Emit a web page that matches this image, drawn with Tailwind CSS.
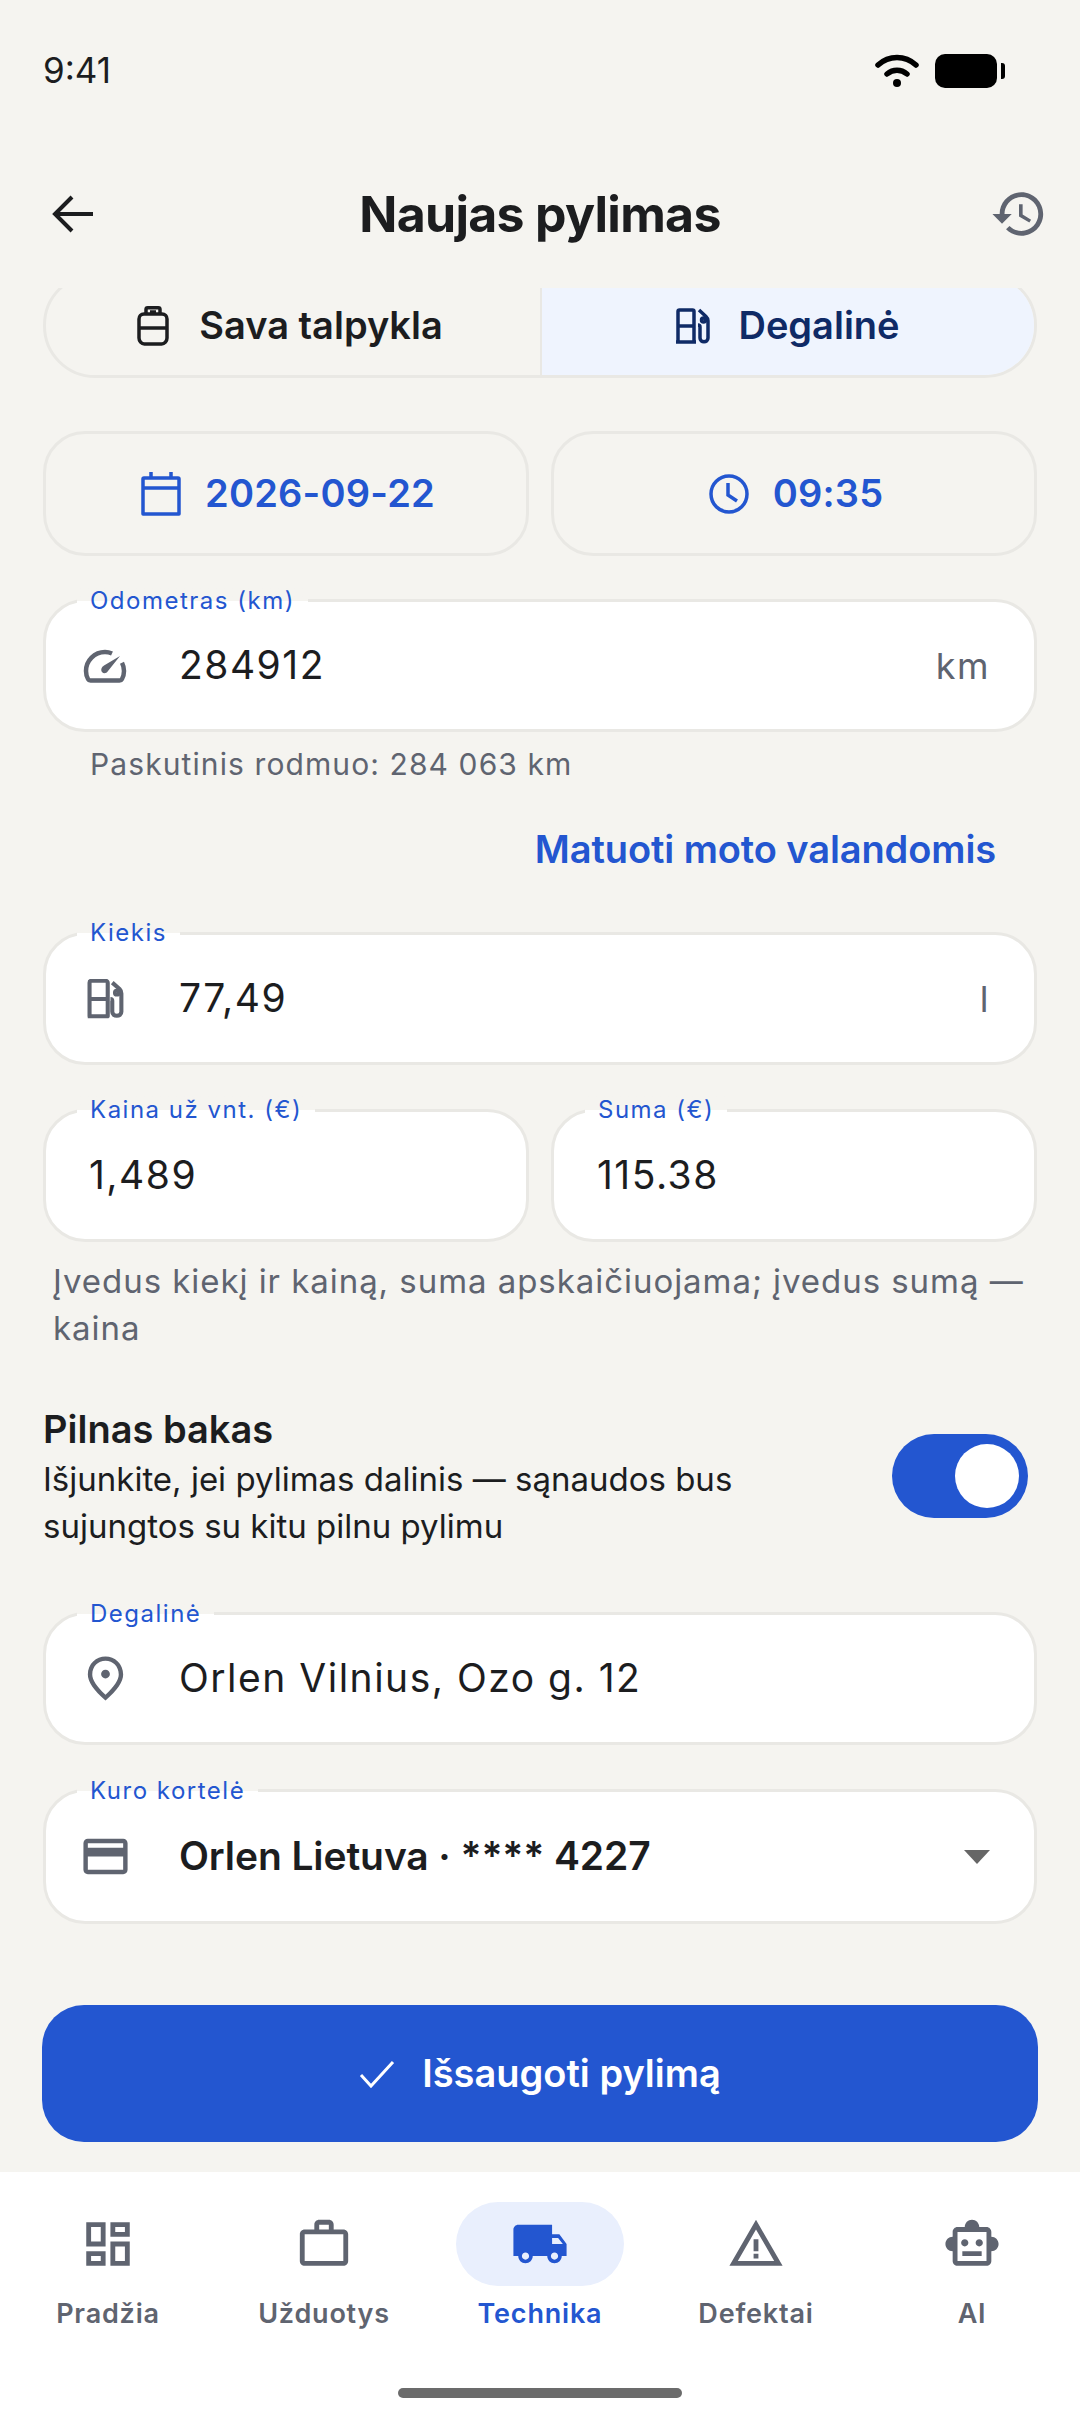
<!DOCTYPE html>
<html lang="lt">
  <head>
    <meta charset="UTF-8" />
    <meta name="viewport" content="width=device-width, initial-scale=1.0" />
    <title>Naujas pylimas</title>
    <script src="https://cdn.jsdelivr.net/npm/@tailwindcss/browser@4"></script>
  </head>
  <body class="bg-[#f5f4f0]">
    <div class="w-[1080px] h-[2424px] flex flex-col font-['Inter',sans-serif] text-[#1c1d1f] overflow-hidden">
      <!-- status bar -->
      <div class="h-[140px] shrink-0 flex justify-between items-start pl-[43px] pr-[44px] pt-[50px]">
        <span class="text-[35px] leading-[40px]">9:41</span>
        <div class="flex items-center gap-[16px] mt-[4px] mr-[31px]">
          <svg class="w-[44px] h-[34px]" viewBox="0 0 44 34" fill="none" stroke="#000" stroke-width="5.5" stroke-linecap="round">
            <path d="M3 11C14 1 30 1 41 11" />
            <path d="M12 20c6-5 14-5 20 0" />
            <circle cx="22" cy="29" r="4" fill="#000" stroke="none" />
          </svg>
          <div class="flex items-center gap-[4px]">
            <div class="w-[62px] h-[34px] rounded-[10px] bg-black"></div>
            <div class="w-[4px] h-[16px] rounded-r-[3px] bg-black"></div>
          </div>
        </div>
      </div>

      <!-- header -->
      <div class="h-[148px] shrink-0 grid grid-cols-[1fr_auto_1fr] items-center px-[32px]">
        <svg class="ml-[20px] w-[42px] h-[38px]" viewBox="0 0 42 38" fill="none" stroke="#1c1d1f" stroke-width="4"><path d="M41 19H4M20 2L3 19l17 17" /></svg>
        <h1 class="text-[50px] leading-[60px] font-bold tracking-[-0.7px]">Naujas pylimas</h1>
        <svg class="w-[58px] h-[58px] justify-self-end" viewBox="0 0 24 24" fill="#5f6470"><path d="M13 3c-4.97 0-9 4.03-9 9H1l3.89 3.89.07.14L9 12H6c0-3.87 3.13-7 7-7s7 3.13 7 7-3.13 7-7 7c-1.93 0-3.68-.79-4.94-2.06l-1.42 1.42C8.27 19.99 10.51 21 13 21c4.97 0 9-4.03 9-9s-4.03-9-9-9zm-1 5v5l4.28 2.54.72-1.21-3.5-2.08V8H12z" /></svg>
      </div>

      <!-- form, scrolled slightly under the header -->
      <main class="flex-1 min-h-0 overflow-hidden px-[43px]">
        <!-- source switch -->
        <div class="h-[105px] -mt-[15px] flex rounded-[52px] border-[3px] border-[#e9e8e4] overflow-hidden text-[38px] font-semibold">
          <div class="w-1/2 flex items-center justify-center gap-[30px] pr-[6px]">
            <svg class="w-[32px] h-[40px]" viewBox="0 0 32 40" fill="none" stroke="#1c1d1f" stroke-width="3.5" stroke-linejoin="round">
              <path d="M9 8V3.5c0-1 .8-1.7 1.7-1.7h10.6c1 0 1.7.8 1.7 1.7V8" />
              <path d="M7 8h18c3 0 5 2.4 5 5v19c0 3-2.4 6-5.400 6H7.400C4.400 38 2 35 2 32V13c0-2.600 2-5 5-5z" />
              <path d="M2 22h28M13 6h6" />
            </svg>
            <span>Sava talpykla</span>
          </div>
          <div class="w-1/2 flex items-center justify-center gap-[28px] bg-[#eff4fe] border-l-[2px] border-[#e9e8e4] text-[#0f2a66]">
            <svg class="w-[34px] h-[36px]" viewBox="0 0 34 36" fill="none" stroke="#0f2a66" stroke-width="3.5" stroke-linejoin="round">
              <path d="M2 34V3.500C2 2.600 2.600 2 3.500 2h13c.9 0 1.500.6 1.500 1.500V34zM2 18h16M0 34h20" />
              <path d="M23 2l7 6.500c1.300 1.200 2 2.500 2 4.300V30c0 5-8 5-8 0V19c0-1-.6-2-2-2" />
              <circle cx="27.500" cy="12" r="2" />
            </svg>
            <span>Degalinė</span>
          </div>
        </div>

        <!-- date and time -->
        <div class="flex gap-[22px] mt-[53px] text-[38px] font-semibold tracking-[0.2px] text-[#2356d0]">
          <div class="flex-1 h-[125px] rounded-[42px] border-[3px] border-[#e9e8e4] flex items-center justify-center gap-[24px] pl-[4px]">
            <svg class="w-[40px] h-[44px]" viewBox="0 0 40 44" fill="none" stroke="#2356d0" stroke-width="3.500" stroke-linejoin="round">
              <path d="M3 6h34c.6 0 1 .4 1 1v35H2V7c0-.6.4-1 1-1zM2 16h36" />
              <path d="M10 0v6M30 0v6" />
            </svg>
            <span>2026-09-22</span>
          </div>
          <div class="flex-1 h-[125px] rounded-[42px] border-[3px] border-[#e9e8e4] flex items-center justify-center gap-[24px] pl-[4px]">
            <svg class="w-[40px] h-[40px]" viewBox="0 0 40 40" fill="none" stroke="#2356d0" stroke-width="3.500">
              <circle cx="20" cy="20" r="18" />
              <path d="M19 9v12l9 6" />
            </svg>
            <span>09:35</span>
          </div>
        </div>

        <!-- odometer -->
        <div class="relative mt-[43px] h-[133px] rounded-[42px] border-[3px] border-[#e9e8e4] bg-white flex items-center pr-[44px] text-[39px] tracking-[1.5px]">
          <span class="absolute -top-[16px] left-[31px] px-[13px] bg-linear-to-b from-[#f5f4f0] from-50% to-white to-50% text-[24px] leading-[30px] tracking-[1.5px] text-[#2356d0]">Odometras (km)</span>
          <div class="ml-[32px] w-[54px] mr-[47px] flex justify-center">
            <svg class="w-[44px] h-[34px]" viewBox="0 0 44 34" fill="none" stroke="#5f6470" stroke-width="4.500" stroke-linejoin="round">
              <path d="M29 4.500C26.800 3.500 24.500 3 22 3 11.500 3 3 11.500 3 22c0 3 .6 5.500 2 8 .5 1 1.300 1.500 2.500 1.500h29c1.200 0 2-.5 2.500-1.500 1.400-2.500 2-5 2-8 0-3-.7-5.800-2-8.300" />
              <path d="M37 7L21 16.500c-2.500 1.500-3.500 4.500-2 6.500 1.500 2 4.500 1.500 6-1z" fill="#5f6470" stroke="none" />
            </svg>
          </div>
          <span class="flex-1">284912</span>
          <span class="text-[#5f6470] text-[36px]">km</span>
        </div>
        <p class="mt-[16px] ml-[47px] text-[30px] leading-[32px] tracking-[1.1px] text-[#5f6470]">Paskutinis rodmuo: 284 063 km</p>
        <p class="mt-[47px] text-right pr-[41px] text-[38px] leading-[44px] font-semibold tracking-[-0.1px] text-[#2356d0]">Matuoti moto valandomis</p>

        <!-- quantity -->
        <div class="relative mt-[61px] h-[133px] rounded-[42px] border-[3px] border-[#e9e8e4] bg-white flex items-center pr-[44px] text-[39px] tracking-[1.5px]">
          <span class="absolute -top-[17px] left-[31px] px-[13px] bg-linear-to-b from-[#f5f4f0] from-50% to-white to-50% text-[24px] leading-[30px] tracking-[1.5px] text-[#2356d0]">Kiekis</span>
          <div class="ml-[32px] w-[54px] mr-[47px] flex justify-center">
            <svg class="w-[38px] h-[40px]" viewBox="0 0 40 44" fill="none" stroke="#5f6470" stroke-width="4.500" stroke-linejoin="round">
              <path d="M3 41V4c0-1 .8-2 2-2h16c1 0 2 1 2 2v37zM3 22h20M1 41h23" />
              <path d="M28 4l8 7c1.500 1.500 2 3 2 5v20c0 6-10 6-10 0V24c0-1-.6-2-2-2" />
              <circle cx="33" cy="15" r="2" />
            </svg>
          </div>
          <span class="flex-1">77,49</span>
          <span class="text-[#5f6470] text-[36px]">l</span>
        </div>

        <!-- price and total -->
        <div class="flex gap-[22px] mt-[44px] text-[39px] tracking-[1.5px]">
          <div class="relative flex-1 h-[133px] rounded-[42px] border-[3px] border-[#e9e8e4] bg-white flex items-center pl-[43px]">
            <span class="absolute -top-[17px] left-[31px] px-[13px] bg-linear-to-b from-[#f5f4f0] from-50% to-white to-50% text-[24px] leading-[30px] tracking-[1.5px] text-[#2356d0]">Kaina už vnt. (€)</span>
            <span>1,489</span>
          </div>
          <div class="relative flex-1 h-[133px] rounded-[42px] border-[3px] border-[#e9e8e4] bg-white flex items-center pl-[43px]">
            <span class="absolute -top-[17px] left-[31px] px-[13px] bg-linear-to-b from-[#f5f4f0] from-50% to-white to-50% text-[24px] leading-[30px] tracking-[1.5px] text-[#2356d0]">Suma (€)</span>
            <span>115.38</span>
          </div>
        </div>
        <p class="mt-[16px] px-[10px] text-[33px] leading-[47px] tracking-[0.95px] text-[#5f6470]">Įvedus kiekį ir kainą, suma apskaičiuojama; įvedus sumą — kaina</p>

        <!-- full tank switch -->
        <div class="flex justify-between items-center mt-[53px] pr-[9px]">
          <div>
            <p class="text-[38px] leading-[48px] font-semibold">Pilnas bakas</p>
            <p class="mt-[3px] text-[33px] leading-[46.5px] w-[760px]">Išjunkite, jei pylimas dalinis — sąnaudos bus sujungtos su kitu pilnu pylimu</p>
          </div>
          <div class="-mt-[3px] w-[136px] h-[84px] rounded-full bg-[#2356d0] flex items-center justify-end pr-[9px]">
            <div class="w-[64px] h-[64px] rounded-full bg-white"></div>
          </div>
        </div>

        <!-- station -->
        <div class="relative mt-[63px] h-[133px] rounded-[42px] border-[3px] border-[#e9e8e4] bg-white flex items-center pr-[44px] text-[39px] tracking-[1.5px]">
          <span class="absolute -top-[16px] left-[31px] px-[13px] bg-linear-to-b from-[#f5f4f0] from-50% to-white to-50% text-[24px] leading-[30px] tracking-[1.5px] text-[#2356d0]">Degalinė</span>
          <div class="ml-[32px] w-[54px] mr-[47px] flex justify-center">
            <svg class="w-[53px] h-[53px]" viewBox="0 0 24 24" fill="#5f6470"><path d="M12 12c-1.100 0-2-.9-2-2s.9-2 2-2 2 .9 2 2-.9 2-2 2zm6-1.800C18 6.570 15.350 4 12 4s-6 2.570-6 6.200c0 2.340 1.950 5.440 6 9.140 4.050-3.700 6-6.800 6-9.140zM12 2c4.200 0 8 3.220 8 8.200 0 3.320-2.670 7.250-8 11.800-5.330-4.550-8-8.480-8-11.800C4 5.220 7.800 2 12 2z" /></svg>
          </div>
          <span>Orlen Vilnius, Ozo g. 12</span>
        </div>

        <!-- fuel card -->
        <div class="relative mt-[44px] h-[135px] rounded-[42px] border-[3px] border-[#e9e8e4] bg-white flex items-center pr-[44px] text-[39px] font-semibold tracking-[-0.1px]">
          <span class="absolute -top-[16px] left-[31px] px-[13px] bg-linear-to-b from-[#f5f4f0] from-50% to-white to-50% text-[24px] leading-[30px] tracking-[1.5px] font-normal text-[#2356d0]">Kuro kortelė</span>
          <div class="ml-[32px] w-[54px] mr-[47px] flex justify-center">
            <svg class="w-[53px] h-[53px]" viewBox="0 0 24 24" fill="#5f6470"><path d="M20 4H4c-1.110 0-1.990.89-1.990 2L2 18c0 1.110.89 2 2 2h16c1.110 0 2-.89 2-2V6c0-1.110-.89-2-2-2zm0 14H4v-6h16v6zm0-10H4V6h16v2z" /></svg>
          </div>
          <span class="flex-1">Orlen Lietuva · **** 4227</span>
          <svg class="w-[26px] h-[14px]" viewBox="0 0 26 14" fill="#666"><path d="M0 0h26L13 14z" /></svg>
        </div>

        <!-- save button -->
        <div class="mt-[81px] -mx-[1px] h-[137px] rounded-[42px] bg-[#2356d0] flex items-center justify-center gap-[27px] text-white text-[38px] font-semibold">
          <svg class="w-[36px] h-[28px]" viewBox="0 0 36 28" fill="none" stroke="#fff" stroke-width="3"><path d="M2 15l10 11L34 2" /></svg>
          <span>Išsaugoti pylimą</span>
        </div>
      </main>

      <!-- bottom navigation -->
      <nav class="relative h-[252px] shrink-0 bg-white flex items-start pt-[30px] text-[27px] font-semibold tracking-[0.8px] text-[#5f6470]">
        <div class="flex-1 flex flex-col items-center">
          <div class="h-[84px] flex items-center"><svg class="w-[58px] h-[58px]" viewBox="0 0 24 24" fill="#5f6470"><path d="M19 5v2h-4V5h4M9 5v6H5V5h4m10 8v6h-4v-6h4M9 17v2H5v-2h4M21 3h-8v6h8V3zM11 3H3v10h8V3zm10 8h-8v10h8V11zm-10 4H3v6h8v-6z" /></svg></div>
          <span class="mt-[8px]">Pradžia</span>
        </div>
        <div class="flex-1 flex flex-col items-center">
          <div class="h-[84px] flex items-center"><svg class="w-[58px] h-[58px]" viewBox="0 0 24 24" fill="#5f6470"><path d="M14 6V4h-4v2h4zM4 8v11h16V8H4zm16-2c1.110 0 2 .89 2 2v11c0 1.110-.89 2-2 2H4c-1.110 0-2-.89-2-2l.01-11c0-1.110.88-2 1.990-2h4V4c0-1.110.89-2 2-2h4c1.110 0 2 .89 2 2v2h4z" /></svg></div>
          <span class="mt-[8px]">Užduotys</span>
        </div>
        <div class="flex-1 flex flex-col items-center text-[#2356d0]">
          <div class="w-[168px] h-[84px] rounded-full bg-[#e9effd] flex items-center justify-center"><svg class="w-[58px] h-[58px]" viewBox="0 0 24 24" fill="#2356d0"><path d="M20 8h-3V4H3c-1.100 0-2 .9-2 2v11h2c0 1.660 1.340 3 3 3s3-1.340 3-3h6c0 1.660 1.340 3 3 3s3-1.340 3-3h2v-5l-3-4zM6 18.500c-.83 0-1.500-.67-1.500-1.500s.67-1.500 1.500-1.500 1.500.67 1.500 1.500-.67 1.500-1.500 1.500zm13.500-9l1.960 2.500H17V9.500h2.500zm-1.500 9c-.83 0-1.500-.67-1.500-1.500s.67-1.500 1.500-1.500 1.500.67 1.500 1.500-.67 1.500-1.500 1.500z" /></svg></div>
          <span class="mt-[8px]">Technika</span>
        </div>
        <div class="flex-1 flex flex-col items-center">
          <div class="h-[84px] flex items-center"><svg class="w-[58px] h-[58px]" viewBox="0 0 24 24" fill="#5f6470"><path d="M12 5.990L19.530 19H4.470L12 5.990M12 2L1 21h22L12 2zm1 14h-2v2h2v-2zm0-6h-2v5h2v-5z" /></svg></div>
          <span class="mt-[8px]">Defektai</span>
        </div>
        <div class="flex-1 flex flex-col items-center">
          <div class="h-[84px] flex items-center"><svg class="w-[58px] h-[58px]" viewBox="0 0 24 24" fill="#5f6470"><path d="M20 9V7c0-1.100-.9-2-2-2h-3c0-1.660-1.340-3-3-3S9 3.340 9 5H6c-1.100 0-2 .9-2 2v2c-1.660 0-3 1.340-3 3s1.340 3 3 3v4c0 1.100.9 2 2 2h12c1.100 0 2-.9 2-2v-4c1.660 0 3-1.340 3-3s-1.340-3-3-3zm-2 10H6V7h12v12zm-9-6c-.83 0-1.500-.67-1.500-1.500S8.170 10 9 10s1.500.67 1.500 1.500S9.830 13 9 13zm7.500-1.500c0 .83-.67 1.500-1.500 1.500s-1.500-.67-1.500-1.500.67-1.500 1.500-1.500 1.500.67 1.500 1.500zM8 15h8v2H8v-2z" /></svg></div>
          <span class="mt-[8px]">AI</span>
        </div>
        <div class="absolute left-[398px] top-[216px] w-[284px] h-[10px] rounded-full bg-[#6b6b6b]"></div>
      </nav>
    </div>
  </body>
</html>
